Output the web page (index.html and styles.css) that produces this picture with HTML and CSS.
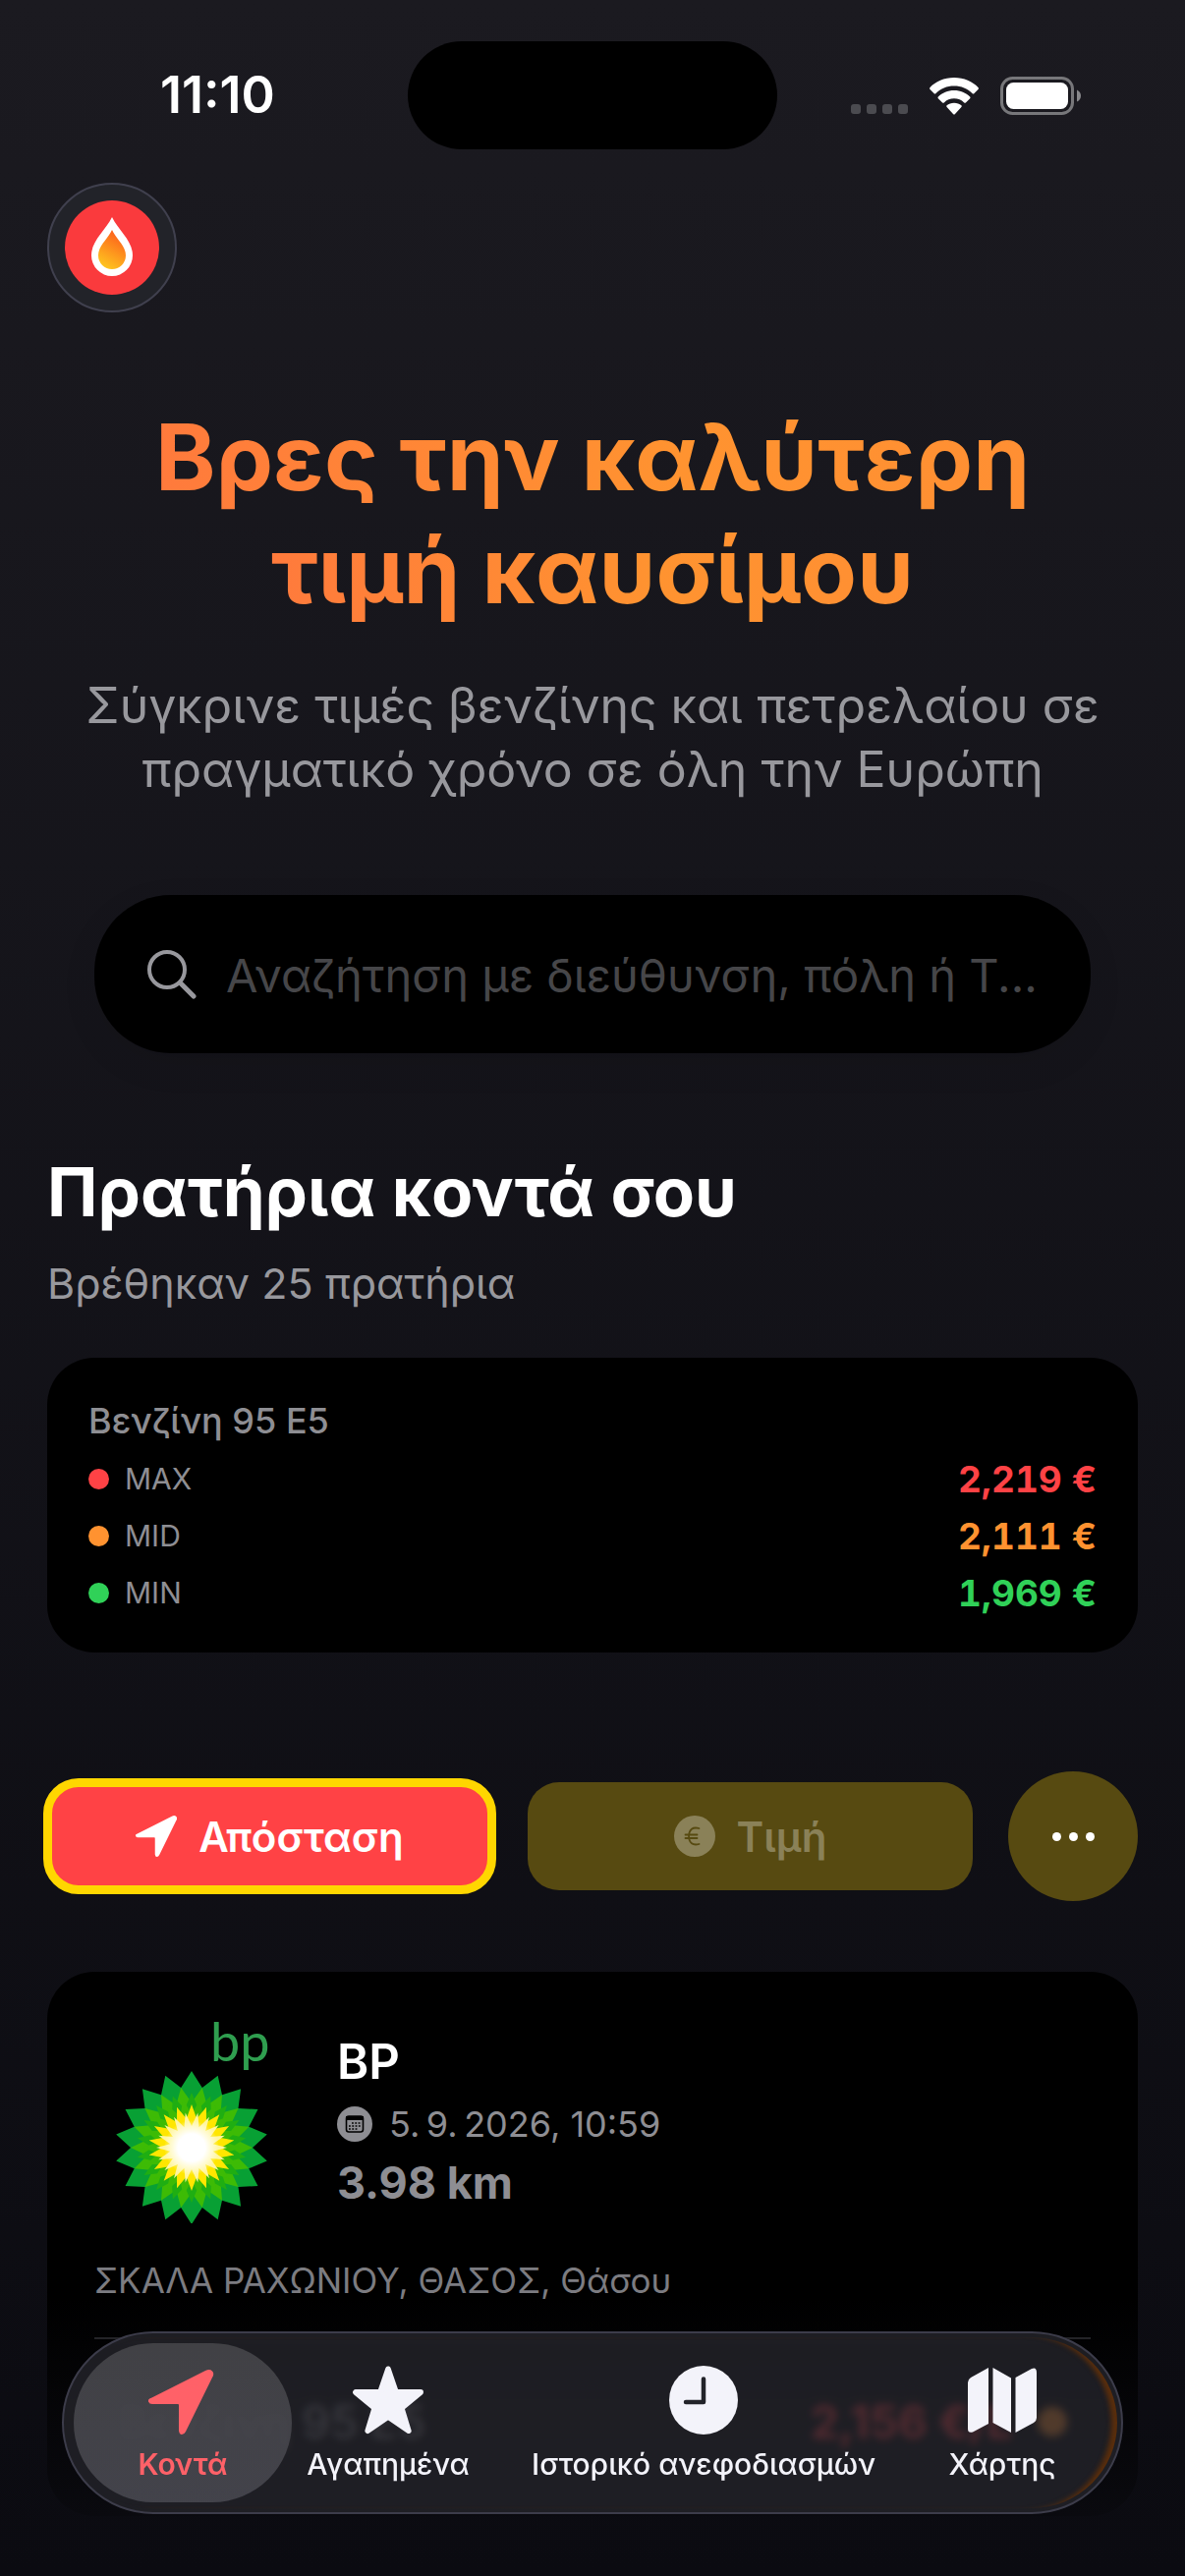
FILE: index.html
```html
<!DOCTYPE html>
<html lang="el">
<head>
<meta charset="utf-8">
<meta name="viewport" content="width=device-width, initial-scale=1">
<title>Τιμές καυσίμων</title>
<link rel="stylesheet" href="styles.css">
</head>
<body>
<header class="status">
  <time class="clock">11:10</time>
  <div class="island"></div>
  <div class="indicators">
    <span class="signal"><i></i><i></i><i></i><i></i></span>
    <svg class="wifi" viewBox="0 0 52 38" aria-hidden="true">
      <path fill="#fff" d="M26 0C36 0 45 4 50.500 10q1 1 0 2l-4 4q-1 1-2 0C39.500 11 33.500 8.500 26 8.500S12.500 11 7.500 16q-1 1-2 0l-4-4q-1-1 0-2C7 4 16 0 26 0ZM26 13c6.500 0 12 2.400 16.200 6.500q.8.900 0 1.700l-4.300 4.200q-.8.800-1.700 0C33.500 22.800 30 21.300 26 21.300s-7.500 1.500-10.200 4.100q-.9.800-1.700 0L9.800 21.200q-.8-.8 0-1.700C14 15.400 19.500 13 26 13ZM26 25.700c3 0 5.500 1 7.400 2.600q.9.800 0 1.700L27 37q-1 1-2 0l-6.400-7q-.9-.9 0-1.700C20.500 26.700 23 25.700 26 25.700Z"/>
    </svg>
    <svg class="battery" viewBox="0 0 82 39" aria-hidden="true">
      <rect x="1.500" y="1.500" width="72" height="36" rx="11" fill="none" stroke="#77777a" stroke-width="3"/>
      <rect x="6" y="6" width="63" height="27" rx="7.500" fill="#fff"/>
      <path d="M78 13.500q4 2 4 6t-4 6Z" fill="#88888b"/>
    </svg>
  </div>
</header>

<main class="page">
  <button class="brand" type="button" aria-label="Αρχική">
    <svg viewBox="0 0 96 96" aria-hidden="true">
      <defs><linearGradient id="flame" x1="0.700" y1="0" x2="0.300" y2="1"><stop offset="0" stop-color="#fd5a1c"/><stop offset="1" stop-color="#fec71f"/></linearGradient></defs>
      <circle cx="48" cy="48" r="48" fill="#fa3a3d"/>
      <path d="M48 17C55 31 69 41 69 56a21 21 0 0 1-42 0C27 41 41 31 48 17Z" fill="#fff"/>
      <path d="M48 30C52 39 62 46 62 56a14 14 0 0 1-28 0C34 46 44 39 48 30Z" fill="url(#flame)"/>
    </svg>
  </button>

  <section class="hero">
    <h1><span>Βρες την καλύτερη</span><br><span>τιμή καυσίμου</span></h1>
    <p>Σύγκρινε τιμές βενζίνης και πετρελαίου σε πραγματικό χρόνο σε όλη την Ευρώπη</p>
    <label class="search">
      <svg viewBox="0 0 50 50" aria-hidden="true"><circle cx="20" cy="20" r="18" fill="none" stroke="#98989d" stroke-width="4"/><path d="M33.500 33.500 47 47" stroke="#98989d" stroke-width="5" stroke-linecap="round"/></svg>
      <input type="text" aria-label="Αναζήτηση" placeholder="Αναζήτηση με διεύθυνση, πόλη ή Τ...">
    </label>
  </section>

  <section class="nearby">
    <h2>Πρατήρια κοντά σου</h2>
    <p class="found">Βρέθηκαν 25 πρατήρια</p>
    <div class="card summary">
      <h3>Βενζίνη 95 E5</h3>
      <dl>
        <div class="max"><dt>MAX</dt><dd>2,219 €</dd></div>
        <div class="mid"><dt>MID</dt><dd>2,111 €</dd></div>
        <div class="min"><dt>MIN</dt><dd>1,969 €</dd></div>
      </dl>
    </div>

    <div class="sort">
      <button class="pick active" type="button">
        <svg viewBox="0 0 66 66" aria-hidden="true"><path fill="currentColor" d="M3.500 28.500 58 1Q62.500-1 65 1.500T65 8L38 63Q36.500 66 34 66T31 62V36Q31 35 30 35H4Q1 35 0 32.500T3.500 28.500Z"/></svg>
        Απόσταση
      </button>
      <button class="pick" type="button">
        <svg viewBox="0 0 42 42" aria-hidden="true"><circle cx="21" cy="21" r="21" fill="currentColor"/><path d="M25.500 13q-8-2-10 4.500-1 3.500 0 7 2 6.500 10 4.500M11.500 19.500h12M11.500 23h12" fill="none" stroke="#574a11" stroke-width="1.800" stroke-linecap="round"/></svg>
        Τιμή
      </button>
      <button class="more" type="button" aria-label="Περισσότερα"><i></i><i></i><i></i></button>
    </div>

    <article class="card station">
      <div class="station-head">
        <svg class="bp" viewBox="0 0 168 208" role="img" aria-label="bp">
          <defs><radialGradient id="core"><stop offset="0.500" stop-color="#fff"/><stop offset="1" stop-color="#fff" stop-opacity="0"/></radialGradient></defs>
          <text x="97" y="43" class="bp-word">bp</text>
          <g id="helios"></g>
        </svg>
        <div class="station-info">
          <h3>BP</h3>
          <p class="updated"><svg viewBox="0 0 36 36" aria-hidden="true"><circle cx="18" cy="18" r="18" fill="#8e8e93"/><rect x="9.500" y="10" width="17" height="16" rx="2.500" fill="none" stroke="#000" stroke-width="1.600"/><path d="M9 12h18" stroke="#000" stroke-width="4"/><path d="M15 17h10M12 20h13M12 23h9" stroke="#000" stroke-width="1.600" stroke-dasharray="1.800 1.500"/></svg>5.&#8201;9.&#8201;2026, 10:59</p>
          <p class="distance">3.98 km</p>
        </div>
      </div>
      <p class="address">ΣΚΑΛΑ ΡΑΧΩΝΙΟΥ, ΘΑΣΟΣ, Θάσου</p>
      <div class="fuel"><span>Βενζίνη 95 E5</span><b>2,156 €/L</b><i></i></div>
    </article>
  </section>
</main>

<nav class="tabs">
  <a class="tab current" href="#near">
    <svg viewBox="0 0 70 70" aria-hidden="true"><path fill="currentColor" transform="translate(0 4)" d="M3.500 28.500 58 1Q62.500-1 65 1.500T65 8L38 63Q36.500 66 34 66T31 62V36Q31 35 30 35H4Q1 35 0 32.500T3.500 28.500Z"/></svg>
    <span>Κοντά</span>
  </a>
  <a class="tab" href="#favourites">
    <svg class="star" viewBox="0 0 76 74" aria-hidden="true"><path fill="currentColor" stroke="currentColor" stroke-width="6" stroke-linejoin="round" d="M38 3.500 46.500 28.500H73L52.500 45.500 60 70 38 55 16 70 23.500 45.500 3 28.500H29.500Z"/></svg>
    <span>Αγαπημένα</span>
  </a>
  <a class="tab" href="#history">
    <svg viewBox="0 0 70 70" aria-hidden="true"><circle cx="35" cy="35" r="35" fill="currentColor"/><path d="M35 13.500V37H17" fill="none" stroke="#222329" stroke-width="4.500" stroke-linecap="round" stroke-linejoin="round"/></svg>
    <span>Ιστορικό ανεφοδιασμών</span>
  </a>
  <a class="tab" href="#map">
    <svg viewBox="0 0 70 66" aria-hidden="true"><path fill="currentColor" d="M21 0V57L5 65.500Q0 67 0 62V15Q0 12 3 10ZM25.500 0 44 10.500V66L25.500 56ZM48.500 10 65 1Q70-1 70 5V51Q70 54 67 56L48.500 66Z"/></svg>
    <span>Χάρτης</span>
  </a>
</nav>
<script src="helios.js"></script>
</body>
</html>
```
FILE: helios.js
```js
// Builds the layered sunflower emblem: rings of 18 pointed petals.
const helios = document.getElementById("helios");
const NS = "http://www.w3.org/2000/svg";
const CX = 78, CY = 131, COUNT = 18;

function ring(outer, inner, color, shift) {
  const points = [];
  for (let i = 0; i < COUNT * 2; i++) {
    const r = i % 2 ? inner : outer;
    const a = ((i + shift) * Math.PI) / COUNT - Math.PI / 2;
    points.push((CX + r * Math.cos(a)).toFixed(1) + "," + (CY + r * Math.sin(a)).toFixed(1));
  }
  const shape = document.createElementNS(NS, "polygon");
  shape.setAttribute("points", points.join(" "));
  shape.setAttribute("fill", color);
  helios.appendChild(shape);
}

ring(78, 62, "#08a034", 0);
ring(62, 46, "#3dbb05", 1);
ring(56, 40, "#1fae12", 0);
ring(50, 34, "#3dbb05", 1);
ring(44, 30, "#ffe600", 0);
ring(36, 22, "#fff6a0", 1);

const core = document.createElementNS(NS, "circle");
core.setAttribute("cx", CX);
core.setAttribute("cy", CY);
core.setAttribute("r", 28);
core.setAttribute("fill", "url(#core)");
helios.appendChild(core);
```
FILE: styles.css
```css
* { box-sizing: border-box; }
body {
  margin: 0;
  min-height: 100vh;
  background: linear-gradient(#1b1a20, #0b0b11) #0b0b11;
  color: #fff;
  font-family: Inter, "Noto Sans", sans-serif;
}
h1, h2, h3, p, dl, dd { margin: 0; }
button { border: 0; padding: 0; font: inherit; color: inherit; }
svg { display: block; flex: none; }

.status {
  display: grid;
  grid-template-columns: 1fr 376px 1fr;
  align-items: center;
  padding-top: 42px;
}
.clock { padding-left: 28px; text-align: center; font-size: 52px; font-weight: 600; line-height: 60px; }
.island { height: 110px; border-radius: 55px; background: #000; }
.indicators { display: flex; align-items: flex-end; justify-content: flex-end; gap: 21px; padding-right: 106px; }
.signal { display: flex; gap: 6px; padding-bottom: 1px; }
.signal i { width: 10px; height: 10px; border-radius: 3px; background: #4b4b50; }
.wifi { width: 52px; height: 38px; }
.battery { width: 82px; height: 39px; }

.page { padding: 34px 48px 0; }
.brand {
  display: grid;
  place-items: center;
  width: 132px;
  height: 132px;
  border: 2px solid #40404e;
  border-radius: 50%;
  background: #222329;
}
.brand svg { width: 96px; height: 96px; }

.hero { padding-top: 90px; text-align: center; }
h1 { font-size: 93px; line-height: 115px; font-weight: 700; }
h1 span {
  background: linear-gradient(90deg, #ff7a3c, #ff9330 60%, #ff8f33);
  -webkit-background-clip: text;
  background-clip: text;
  color: transparent;
}
.hero p { margin-top: 48px; font-size: 50px; line-height: 65px; color: #98989d; }
.search {
  display: flex;
  align-items: center;
  gap: 30px;
  height: 161px;
  margin: 95px 48px 0;
  padding: 0 50px 0 54px;
  border-radius: 78px;
  background: #000;
  box-shadow: 0 12px 36px rgba(0, 0, 0, 0.08);
}
.search svg { width: 50px; height: 50px; }
.search input {
  flex: 1;
  min-width: 0;
  padding: 2px 0 0;
  border: 0;
  outline: 0;
  background: none;
  color: #fff;
  font: 47px/64px Inter, "Noto Sans", sans-serif;
  text-overflow: ellipsis;
}
.search input::placeholder { color: #464649; opacity: 1; }

.nearby { padding-top: 96px; }
h2 { font-size: 69px; line-height: 90px; font-weight: 700; }
.found { margin-top: 20px; font-size: 43px; line-height: 56px; color: #98989d; }
.card { border-radius: 48px; background: #000; }
.summary { margin-top: 48px; padding: 40px 42px 32px; }
.summary h3 { font-size: 36px; line-height: 48px; font-weight: 500; color: #8e8e93; }
.summary dl { padding-top: 6px; }
.summary dl > div { display: flex; align-items: center; justify-content: space-between; height: 58px; }
.summary dt { display: flex; align-items: center; gap: 16px; font-size: 30px; color: #8e8e93; }
.summary dt::before { content: ""; width: 21px; height: 21px; border-radius: 50%; background: var(--level); }
.summary dd { font-size: 37px; font-weight: 700; color: var(--level); font-variant-numeric: tabular-nums; }
.max { --level: #ff4245; }
.mid { --level: #ff9230; }
.min { --level: #30d158; }

.sort { display: flex; align-items: center; gap: 36px; margin-top: 121px; }
.pick {
  display: flex;
  flex: 1;
  align-items: center;
  justify-content: center;
  gap: 22px;
  height: 110px;
  border-radius: 32px;
  background: #574a11;
  color: #8a8158;
  font-size: 42px;
  font-weight: 600;
}
.pick svg { width: 42px; height: 42px; }
.pick.active { background: #ff4245; color: #fff; outline: 9px solid #ffd600; outline-offset: -5px; }
.more {
  display: flex;
  align-items: center;
  justify-content: center;
  gap: 8px;
  width: 132px;
  height: 132px;
  border-radius: 50%;
  background: #574a11;
}
.more i { width: 9px; height: 9px; border-radius: 50%; background: #fff; }

.station { margin-top: 72px; padding: 48px 48px 62px; background: linear-gradient(#000 60%, #0a0a0f); }
.station-head { display: flex; align-items: center; gap: 58px; padding-left: 21px; }
.bp { width: 168px; height: 208px; }
.bp-word { font: 54px Lato, sans-serif; fill: #2f9e4f; }
.station-info h3 { font-size: 49px; line-height: 68px; font-weight: 600; }
.updated { display: flex; align-items: center; gap: 17px; font-size: 36px; line-height: 58px; color: #8e8e93; }
.updated svg { width: 36px; height: 36px; }
.distance { font-size: 45px; line-height: 62px; font-weight: 700; color: #8e8e93; }
.address { padding: 34px 0 34px; border-bottom: 2px solid #242428; font-size: 35px; line-height: 48px; color: #7c7c81; }
.fuel { display: flex; align-items: center; gap: 26px; padding: 50px 24px 0; font-size: 46px; line-height: 68px; }
.fuel span { flex: 1; color: #8e8e93; font-weight: 500; }
.fuel b { color: #ff4245; }
.fuel i { width: 30px; height: 30px; border-radius: 50%; background: #ff9230; }

.tabs {
  position: fixed;
  right: 63px;
  bottom: 63px;
  left: 63px;
  display: grid;
  grid-template-columns: 222fr 196fr 446fr 162fr;
  align-items: center;
  height: 186px;
  padding: 0 40px 0 10px;
  border: 2px solid #3c3c4a;
  border-radius: 93px;
  background: rgba(36, 36, 42, 0.8);
  backdrop-filter: blur(4px);
}
/* Orange light caught by the right-hand rim of the glass */
.tabs::after {
  content: "";
  position: absolute;
  inset: 4px;
  border-radius: 87px;
  box-shadow: inset -9px 0 5px -3px #5a2e0c;
  pointer-events: none;
}
.tab {
  display: flex;
  flex-direction: column;
  align-items: center;
  justify-content: center;
  gap: 12px;
  height: 162px;
  padding-top: 2px;
  border-radius: 81px;
  color: #f3f3fa;
  font-size: 30px;
  line-height: 36px;
  font-weight: 500;
  text-decoration: none;
  white-space: nowrap;
}
.tab svg { width: 70px; height: 70px; }
.tab .star { width: 76px; }
.current {
  background: linear-gradient(rgba(68, 68, 72, 0.92), rgba(70, 70, 78, 0.92));
  color: #ff6168;
  font-weight: 600;
}
```
